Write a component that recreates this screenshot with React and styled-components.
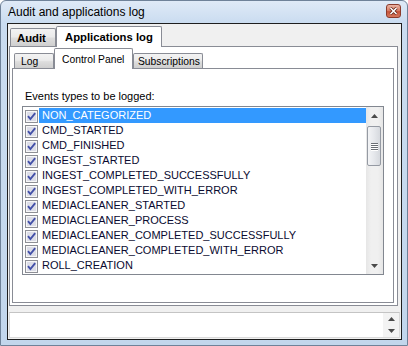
import React from 'react';
import styled, { createGlobalStyle } from 'styled-components';

const EVENTS = [
  'NON_CATEGORIZED',
  'CMD_STARTED',
  'CMD_FINISHED',
  'INGEST_STARTED',
  'INGEST_COMPLETED_SUCCESSFULLY',
  'INGEST_COMPLETED_WITH_ERROR',
  'MEDIACLEANER_STARTED',
  'MEDIACLEANER_PROCESS',
  'MEDIACLEANER_COMPLETED_SUCCESSFULLY',
  'MEDIACLEANER_COMPLETED_WITH_ERROR',
  'ROLL_CREATION',
];

const GlobalStyle = createGlobalStyle`
  html, body {
    margin: 0;
    padding: 0;
    background: #ffffff;
  }
  body {
    font-family: "Liberation Sans", Arial, sans-serif;
    color: #000;
  }
  * {
    box-sizing: border-box;
  }
`;

const Window = styled.div`
  width: 408px;
  height: 346px;
  border: 1px solid #6f8299;
  border-radius: 6px 6px 0 0;
  background: linear-gradient(#dfeaf7 0px, #cadcf0 22px, #c2d6ec 100%);
  padding: 0 5px 5px 6px;
  display: flex;
  flex-direction: column;
`;

const TitleBar = styled.div`
  height: 22px;
  display: flex;
  align-items: center;
  justify-content: space-between;
  padding: 0 1px 0 1px;
`;

const Title = styled.span`
  font-size: 12px;
  line-height: 14px;
  color: #000;
`;

const CloseButton = styled.div`
  width: 15px;
  height: 14px;
  border: 1px solid #8b3b2c;
  border-radius: 3px;
  background: linear-gradient(#eab4a4 0%, #d9826b 45%, #c7553b 55%, #d5775c 100%);
  display: flex;
  align-items: center;
  justify-content: center;
  margin-top: -2px;
`;

const Client = styled.div`
  flex: 1;
  border: 1px solid #1e1e1e;
  background: #f0f0f0;
  display: flex;
  flex-direction: column;
`;

const TabControl = styled.div`
  margin: 0 3px 0 1px;
  display: flex;
  flex-direction: column;
`;

const TabStrip = styled.div`
  height: ${(p) => p.$height}px;
  display: flex;
  align-items: flex-end;
  padding-left: ${(p) => p.$indent}px;
`;

const Tab = styled.div`
  width: ${(p) => p.$width}px;
  height: ${(p) => p.$height}px;
  border: 1px solid #898c95;
  border-bottom: none;
  border-radius: 2px 2px 0 0;
  background: ${(p) =>
    p.$selected
      ? '#ffffff'
      : 'linear-gradient(#f3f3f3 0%, #ebebeb 45%, #dddddd 55%, #cfcfcf 100%)'};
  margin-bottom: ${(p) => (p.$selected ? -1 : 0)}px;
  position: relative;
  z-index: ${(p) => (p.$selected ? 1 : 0)};
  display: flex;
  align-items: center;
  padding-left: ${(p) => p.$pad}px;
  font-size: ${(p) => (p.$bold ? 11.3 : 10.3)}px;
  font-weight: ${(p) => (p.$bold ? 700 : 400)};
  padding-top: ${(p) => (p.$selected ? 0 : 1)}px;
  white-space: nowrap;
`;

const OuterPage = styled.div`
  height: 260px;
  border: 1px solid #898c95;
  background: #ffffff;
  padding: 0 3px 2px 2px;
  display: flex;
  flex-direction: column;
`;

const InnerPage = styled.div`
  height: 235px;
  border: 1px solid #898c95;
  background: #ffffff;
  padding: 21px 0 0 0;
  display: flex;
  flex-direction: column;
`;

const Caption = styled.div`
  font-size: 11px;
  line-height: 13px;
  padding-left: 12px;
`;

const ListBox = styled.div`
  margin: 3px 0 0 9px;
  width: 362px;
  height: 169px;
  border: 1px solid #828790;
  background: #fff;
  display: flex;
`;

const Items = styled.div`
  flex: 1;
  padding-top: 1px;
  display: flex;
  flex-direction: column;
`;

const Row = styled.div`
  height: 15px;
  display: flex;
  align-items: flex-start;
  padding-left: 2px;
`;

const Check = styled.svg`
  flex: none;
  margin-top: 2px;
  margin-right: 1px;
`;

const ItemText = styled.div`
  flex: 1;
  height: 15px;
  line-height: 15px;
  font-size: 11px;
  padding-left: 3px;
  color: ${(p) => (p.$selected ? '#ffffff' : '#0a0a30')};
  background: ${(p) => (p.$selected ? '#3399ff' : 'transparent')};
  white-space: nowrap;
`;

const ScrollBar = styled.div`
  width: 17px;
  flex: none;
  background: linear-gradient(90deg, #e6e6e6, #f0f0f0 30%, #f0f0f0 70%, #e6e6e6);
  display: flex;
  flex-direction: column;
`;

const ArrowButton = styled.div`
  height: ${(p) => p.$height}px;
  display: flex;
  align-items: center;
  justify-content: center;
`;

const Track = styled.div`
  flex: 1;
  padding: 2px 2px 0 1px;
`;

const Thumb = styled.div`
  height: 40px;
  border: 1px solid #959aa3;
  border-radius: 2px;
  background: linear-gradient(90deg, #f3f4f6 0%, #e6e8ec 50%, #d6d9de 100%);
  display: flex;
  flex-direction: column;
  align-items: center;
  justify-content: center;
  gap: 1px;
`;

const Grip = styled.div`
  width: 7px;
  height: 1px;
  background: #6a6e75;
  box-shadow: 0 1px 0 #ffffff;
`;

const LogBox = styled.div`
  margin: 6px 1px 0 1px;
  height: 26px;
  border: 1px solid #dadada;
  border-top-color: #c4c4c4;
  background: #ffffff;
  display: flex;
  justify-content: flex-end;
`;

const MiniScroll = styled.div`
  width: 16px;
  background: #f3f3f3;
  display: flex;
  flex-direction: column;
`;

const CheckBox = () => (
  <Check width="13" height="13" viewBox="0 0 13 13">
    <rect x="0.5" y="0.5" width="12" height="12" fill="#f7f7f7" stroke="#8e8f96" />
    <rect x="2" y="2" width="9" height="9" fill="#dcdde8" />
    <path d="M3 6.2 L5.4 9 L10.2 3.2" stroke="#4350a8" strokeWidth="1.9" fill="none" />
  </Check>
);

const Arrow = ({ up }) => (
  <svg width="7" height="4" viewBox="0 0 7 4">
    <path d={up ? 'M0 4 L3.5 0 L7 4 Z' : 'M0 0 L7 0 L3.5 4 Z'} fill="#4a4a4a" />
  </svg>
);

const App = () => (
  <>
    <GlobalStyle />
    <Window>
      <TitleBar>
        <Title>Audit and applications log</Title>
        <CloseButton>
          <svg width="9" height="8" viewBox="0 0 9 8">
            <path d="M1.5 1 L7.5 7 M7.5 1 L1.5 7" stroke="#5a1e12" strokeWidth="3" />
            <path d="M1.5 1 L7.5 7 M7.5 1 L1.5 7" stroke="#ffffff" strokeWidth="1.6" />
          </svg>
        </CloseButton>
      </TitleBar>
      <Client>
        <TabControl>
          <TabStrip $height={22} $indent={1}>
            <Tab $width={46} $height={18} $pad={6} $bold>Audit</Tab>
            <Tab $width={106} $height={21} $pad={8} $bold $selected>Applications log</Tab>
          </TabStrip>
          <OuterPage>
            <TabStrip $height={21} $indent={2}>
              <Tab $width={40} $height={15} $pad={6}>Log</Tab>
              <Tab $width={79} $height={21} $pad={7} $selected>Control Panel</Tab>
              <Tab $width={70} $height={15} $pad={4}>Subscriptions</Tab>
            </TabStrip>
            <InnerPage>
              <Caption>Events types to be logged:</Caption>
              <ListBox>
                <Items>
                  {EVENTS.map((name, i) => (
                    <Row key={name}>
                      <CheckBox />
                      <ItemText $selected={i === 0}>{name}</ItemText>
                    </Row>
                  ))}
                </Items>
                <ScrollBar>
                  <ArrowButton $height={17}><Arrow up /></ArrowButton>
                  <Track>
                    <Thumb>
                      <Grip />
                      <Grip />
                      <Grip />
                      <Grip />
                    </Thumb>
                  </Track>
                  <ArrowButton $height={17}><Arrow /></ArrowButton>
                </ScrollBar>
              </ListBox>
            </InnerPage>
          </OuterPage>
        </TabControl>
        <LogBox>
          <MiniScroll>
            <ArrowButton $height={12}><Arrow up /></ArrowButton>
            <ArrowButton $height={12}><Arrow /></ArrowButton>
          </MiniScroll>
        </LogBox>
      </Client>
    </Window>
  </>
);

export default App;
